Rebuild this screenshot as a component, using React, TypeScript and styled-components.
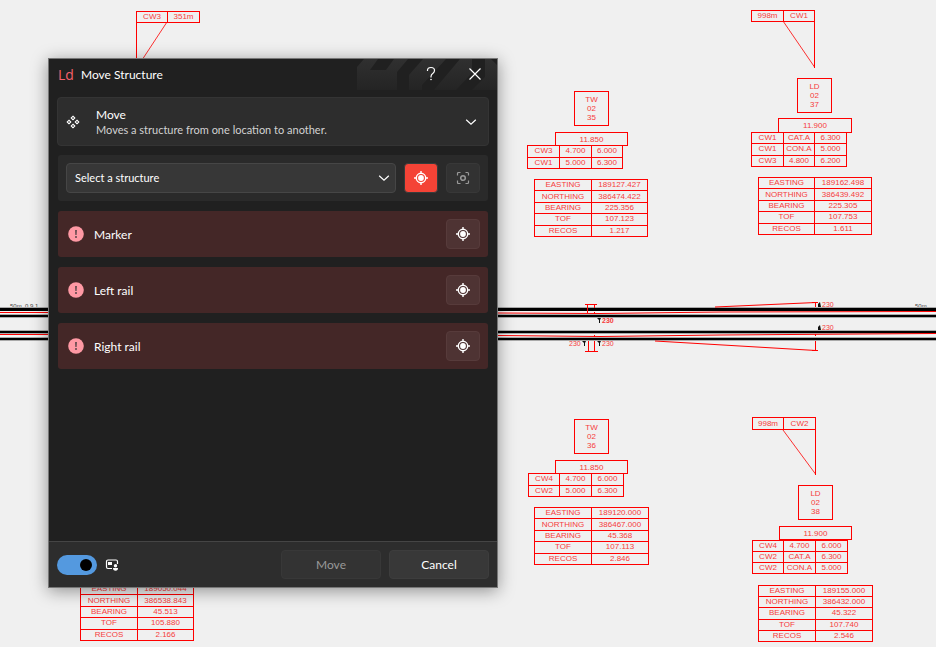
import React from "react";
import styled, { createGlobalStyle } from "styled-components";

const GlobalStyle = createGlobalStyle`
  *, *::before, *::after { box-sizing: border-box; }
  body {
    margin: 0;
    background: #f0f0f0;
    font-family: Lato, "Open Sans", sans-serif;
  }
`;

/* ---------- Drawing canvas ---------- */

const Canvas = styled.main`
  position: relative;
  min-height: 100vh;
  overflow: hidden;
  background: #f0f0f0;
`;

const Linework = styled.svg`
  position: absolute;
  inset: 0;
  width: 100%;
  height: 100%;
  font-family: "Liberation Sans", sans-serif;
  font-size: 6px;
`;

type Box = { $x: number; $y: number; $w: number; $h: number };

const Sheet = styled.table<Box>`
  position: absolute;
  left: ${(p) => p.$x}px;
  top: ${(p) => p.$y}px;
  width: ${(p) => p.$w}px;
  height: ${(p) => p.$h}px;
  table-layout: fixed;
  border-collapse: collapse;
  color: #f63c3c;
  font: 8px/8px "Liberation Sans", sans-serif;
  text-align: center;

  td {
    border: 1px solid #ff0000;
    padding: 0;
    white-space: nowrap;
  }
`;

const Plate = styled.div<Box>`
  position: absolute;
  left: ${(p) => p.$x}px;
  top: ${(p) => p.$y}px;
  width: ${(p) => p.$w}px;
  height: ${(p) => p.$h}px;
  display: flex;
  flex-direction: column;
  align-items: center;
  justify-content: center;
  border: 1px solid #ff0000;
  color: #f63c3c;
  font: 8px/9px "Liberation Sans", sans-serif;
`;

type Place = [number, number, number, number];

function DataSheet({ at, cols, rows }: { at: Place; cols: string[]; rows: string[][] }) {
  const [x, y, w, h] = at;
  return (
    <Sheet $x={x} $y={y} $w={w} $h={h}>
      <colgroup>
        {cols.map((c, i) => (
          <col key={i} width={c} />
        ))}
      </colgroup>
      <tbody>
        {rows.map((r, i) => (
          <tr key={i}>
            {r.map((c, j) => (
              <td key={j}>{c}</td>
            ))}
          </tr>
        ))}
      </tbody>
    </Sheet>
  );
}

function Label({ at, lines }: { at: Place; lines: string[] }) {
  const [x, y, w, h] = at;
  return (
    <Plate $x={x} $y={y} $w={w} $h={h}>
      {lines.map((l) => (
        <span key={l}>{l}</span>
      ))}
    </Plate>
  );
}

const info = (e: string, n: string, b: string, t: string, r: string) => [
  ["EASTING", e],
  ["NORTHING", n],
  ["BEARING", b],
  ["TOF", t],
  ["RECOS", r],
];

const half = ["57", "56"];
const thirds = ["32", "32", "31"];
const pair = ["32", "31"];

const sheets: { at: Place; cols: string[]; rows: string[][] }[] = [
  { at: [136, 11, 63, 12], cols: ["31", "32"], rows: [["CW3", "351m"]] },
  { at: [751, 10, 63, 12], cols: pair, rows: [["998m", "CW1"]] },
  { at: [752, 417, 63, 13], cols: ["31", "32"], rows: [["998m", "CW2"]] },
  { at: [527, 145, 95, 24], cols: thirds, rows: [["CW3", "4.700", "6.000"], ["CW1", "5.000", "6.300"]] },
  { at: [528, 473, 95, 24], cols: ["31", "32", "32"], rows: [["CW4", "4.700", "6.000"], ["CW2", "5.000", "6.300"]] },
  {
    at: [751, 132, 95, 35],
    cols: ["32", "31", "32"],
    rows: [["CW1", "CAT.A", "6.300"], ["CW1", "CON.A", "5.000"], ["CW3", "4.800", "6.200"]],
  },
  {
    at: [752, 540, 95, 34],
    cols: ["31", "32", "32"],
    rows: [["CW4", "4.700", "6.000"], ["CW2", "CAT.A", "6.300"], ["CW2", "CON.A", "5.000"]],
  },
  { at: [534, 179, 113, 58], cols: half, rows: info("189127.427", "386474.422", "225.356", "107.123", "1.217") },
  { at: [758, 177, 113, 58], cols: ["56", "57"], rows: info("189162.498", "386439.492", "225.305", "107.753", "1.611") },
  { at: [534, 507, 114, 58], cols: ["57", "57"], rows: info("189120.000", "386467.000", "45.368", "107.113", "2.846") },
  { at: [758, 585, 114, 57], cols: ["57", "57"], rows: info("189155.000", "386432.000", "45.322", "107.740", "2.546") },
  { at: [80, 583, 113, 58], cols: half, rows: info("189050.044", "386538.843", "45.513", "105.880", "2.166") },
];

const labels: { at: Place; lines: string[] }[] = [
  { at: [574, 91, 35, 35], lines: ["TW", "02", "35"] },
  { at: [574, 419, 35, 35], lines: ["TW", "02", "36"] },
  { at: [797, 78, 35, 35], lines: ["LD", "02", "37"] },
  { at: [798, 485, 35, 35], lines: ["LD", "02", "38"] },
  { at: [555, 132, 73, 14], lines: ["11.850"] },
  { at: [555, 460, 73, 14], lines: ["11.850"] },
  { at: [778, 118, 74, 15], lines: ["11.900"] },
  { at: [779, 526, 73, 14], lines: ["11.900"] },
];

const Track = () => (
  <Linework aria-hidden="true">
    <g fill="#444">
      <text x="10" y="308">50m&#160;&#160;0.9.1</text>
      <text x="915" y="308">50m</text>
    </g>
    <g fill="#aaa">
      <rect y="307" width="100%" height="11" />
      <rect y="330" width="100%" height="11" />
    </g>
    <g fill="#f4f4f4">
      <rect y="311" width="100%" height="3" />
      <rect y="334" width="100%" height="3" />
    </g>
    <g fill="#000">
      <rect y="308" width="100%" height="3" />
      <rect y="315" width="100%" height="2" />
      <rect y="331" width="100%" height="2" />
      <rect y="338" width="100%" height="2" />
    </g>
    <g stroke="#ff0000" fill="none">
      <path d="M0 312.500H48M498 313L600 313.500L720 312L936 311.500H4000" />
      <path d="M0 334.500H48M498 335.500L600 336.500L720 335L936 333.500H4000" />
      <path d="M585 304.500H597M587.500 304V313M594.500 304V308M594.500 312V314M715 307L816 302.500M812 302.500H818M815.500 302V307" />
      <path d="M585 351.500H598M588.500 341V351M594.500 341V351M594.500 335V337M655 341L816 350.500M812 350.500H818M815.500 334V336M815.500 341V350" />
    </g>
    <g stroke="#ff0000" fill="none">
      <path d="M136.500 22V60M814.500 21V68M815.500 429V475" />
      <path d="M167 22L142 60M783 21L814.500 67M783 430L815.500 474" strokeOpacity=".8" />
    </g>
    <g fill="#111">
      <path d="M818 307V304L820 302L821 307ZM818 330V327L820 325L821 330ZM597 318H601L600 320V323H599V320ZM597 341H601L600 343V346H599V343ZM582 341H586L585 343V346H584V343Z" />
    </g>
    <g fill="#f63c3c" fontSize="7">
      <text x="822" y="307">230</text>
      <text x="822" y="330">230</text>
      <text x="602" y="323" fontWeight="bold">230</text>
      <text x="602" y="346">230</text>
      <text x="569" y="346">230</text>
    </g>
  </Linework>
);

/* ---------- Dialog ---------- */

const Dialog = styled.section`
  position: absolute;
  left: 48px;
  top: 58px;
  width: 450px;
  min-height: 530px;
  display: flex;
  flex-direction: column;
  border: 1px solid #777;
  background: #202020;
  color: #fff;
  font-size: 12px;
  line-height: 16px;
  box-shadow: 0 3px 16px rgba(0, 0, 0, 0.4);
`;

const TitleBar = styled.header`
  position: relative;
  display: flex;
  align-items: center;
  height: 32px;
  padding: 0 8px;
`;

const Pattern = styled.svg`
  position: absolute;
  top: 0;
  right: 0;
`;

const Brand = styled.span`
  width: 24px;
  padding-left: 1px;
  color: #f5616b;
  font: 400 14px/20px "Open Sans", sans-serif;
`;

const Title = styled.h1`
  flex: 1;
  margin: 0;
  font-size: 12px;
  font-weight: 400;
`;

const CaptionButton = styled.button`
  position: relative;
  display: grid;
  place-items: center;
  align-self: flex-start;
  width: 28px;
  height: 30px;
  margin-left: 16px;
  padding: 0;
  border: 0;
  background: transparent;
  color: #fff;
`;

const Content = styled.div`
  flex: 1;
  display: flex;
  flex-direction: column;
  gap: 10px;
  padding: 6px 9px;
`;

const CommandCard = styled.button`
  display: flex;
  align-items: center;
  height: 49px;
  margin: 0 -1px -1px;
  padding: 0 11px 0 8px;
  border: 1px solid #343434;
  border-radius: 4px;
  background: #2d2d2d;
  color: #fff;
  font: inherit;
  text-align: left;
`;

const CommandText = styled.span`
  flex: 1;
  display: flex;
  flex-direction: column;
  margin-left: 16px;
`;

const CommandName = styled.span`
  line-height: 15px;
`;

const CommandHint = styled.span`
  color: #d2d2d2;
  font-size: 11px;
  line-height: 15px;
`;

const Row = styled.div<{ $error?: boolean }>`
  display: flex;
  align-items: center;
  gap: ${(p) => (p.$error ? 10 : 8)}px;
  height: 46px;
  padding: ${(p) => (p.$error ? "0 8px 0 10px" : "0 8px")};
  border-radius: 3px;
  background: ${(p) => (p.$error ? "#442727" : "#2a2a2a")};
`;

const RowLabel = styled.span`
  flex: 1;
  padding-top: 2px;
`;

const SelectWrap = styled.label`
  position: relative;
  flex: 1;
  display: flex;

  svg {
    position: absolute;
    right: 6px;
    top: 9px;
    pointer-events: none;
  }
`;

const Select = styled.select`
  appearance: none;
  width: 100%;
  height: 30px;
  padding: 0 28px 0 8px;
  border: 1px solid #464646;
  border-radius: 4px;
  background: #373737;
  color: #fff;
  font: 11px/16px Lato, "Open Sans", sans-serif;
`;

const tones = {
  active: ["#f44336", "#373c3c", "#fff"],
  idle: ["#323232", "#383838", "#999"],
  error: ["#4e3333", "#573b3b", "#fff"],
};

const ToolButton = styled.button<{ $tone: keyof typeof tones }>`
  display: grid;
  place-items: center;
  width: 34px;
  height: 30px;
  padding: 0;
  border: 1px solid ${(p) => tones[p.$tone][1]};
  border-radius: 4px;
  background: ${(p) => tones[p.$tone][0]};
  color: ${(p) => tones[p.$tone][2]};
`;

const Footer = styled.footer`
  display: flex;
  align-items: center;
  gap: 8px;
  height: 46px;
  padding: 0 8px;
  border-top: 1px solid #454545;
  background: #2d2d2d;
`;

const Option = styled.label`
  flex: 1;
  display: flex;
  align-items: center;
  gap: 8px;
`;

const Toggle = styled.input`
  appearance: none;
  display: flex;
  align-items: center;
  justify-content: flex-start;
  width: 40px;
  height: 20px;
  margin: 0;
  padding: 0 5px;
  border-radius: 10px;
  background: #777;

  &::before {
    content: "";
    width: 12px;
    height: 12px;
    border-radius: 50%;
    background: #000;
  }

  &:checked {
    justify-content: flex-end;
    background: #5499df;
  }
`;

const ActionButton = styled.button`
  width: 100px;
  height: 29px;
  padding: 0;
  border: 1px solid #3d3d3d;
  border-radius: 4px;
  background: #383838;
  color: #fff;
  font: inherit;

  &:disabled {
    border-color: #383838;
    background: #333;
    color: #999;
  }
`;

const Chevron = () => (
  <svg width="12" height="12" viewBox="0 0 12 12" fill="none" stroke="currentColor" strokeWidth="1.200">
    <path d="M1.200 3.800L6 8.200L10.800 3.800" />
  </svg>
);

const Target = () => (
  <svg width="14" height="14" viewBox="0 0 14 14" fill="none" stroke="currentColor" strokeWidth="1.4">
    <circle cx="7" cy="7" r="4.700" />
    <circle cx="7" cy="7" r="2.900" fill="currentColor" stroke="none" />
    <path d="M7 0V2.300M7 11.700V14M0 7H2.300M11.700 7H14" />
  </svg>
);

const Capture = () => (
  <svg width="14" height="14" viewBox="0 0 14 14" fill="none" stroke="currentColor" strokeWidth="1.200">
    <path d="M1.500 4.500V2.500Q1.500 1.500 2.500 1.500H4.500M9.500 1.500H11.500Q12.500 1.500 12.500 2.500V4.500M12.500 9.500V11.500Q12.500 12.500 11.500 12.500H9.500M4.500 12.500H2.500Q1.500 12.500 1.500 11.500V9.500" />
    <circle cx="7" cy="7" r="2.300" strokeWidth="1.500" />
  </svg>
);

const Alert = () => (
  <svg width="16" height="16" viewBox="0 0 16 16">
    <circle cx="8" cy="8" r="7.800" fill="#ff99a4" />
    <path d="M7.100 4H8.900L8.600 9H7.400Z" fill="#5a4548" />
    <circle cx="8" cy="11" r="1" fill="#5a4548" />
  </svg>
);

const MoveGlyph = () => (
  <svg width="14" height="14" viewBox="0 0 14 14" fill="none" stroke="currentColor" strokeWidth="1.100">
    <path d="M7 1.200L8.800 3L7 4.800L5.200 3ZM7 9.200L8.800 11L7 12.800L5.200 11ZM3 5.200L4.800 7L3 8.800L1.200 7ZM11 5.200L12.800 7L11 8.800L9.200 7Z" />
  </svg>
);

const PanelGlyph = () => (
  <svg width="14" height="14" viewBox="0 0 14 14" fill="none" stroke="#fff">
    <path d="M7 10.500H3Q1.500 10.500 1.500 9V3.500Q1.500 2 3 2H11Q12.500 2 12.500 3.500V6" strokeWidth="1.200" />
    <rect x="3" y="4" width="4" height="3" fill="#fff" stroke="none" />
    <circle cx="10.500" cy="7.800" r="1.700" fill="#fff" stroke="none" />
    <path d="M8 10H13Q13 12.800 10.500 12.800Q8 12.800 8 10Z" fill="#fff" stroke="none" />
  </svg>
);

export default function App() {
  return (
    <>
      <GlobalStyle />
      <Canvas>
        <Track />
        {sheets.map((s, i) => (
          <DataSheet key={i} {...s} />
        ))}
        {labels.map((l, i) => (
          <Label key={i} {...l} />
        ))}

        <Dialog role="dialog" aria-labelledby="dialog-title">
          <TitleBar>
            <Pattern width="140" height="31" viewBox="0 0 140 31" aria-hidden="true">
              <defs>
                <linearGradient id="fade" x1="0" y1="0" x2="0" y2="31" gradientUnits="userSpaceOnUse">
                  <stop offset="0" stopColor="#303030" />
                  <stop offset="1" stopColor="#242424" />
                </linearGradient>
              </defs>
              <path
                fill="url(#fade)"
                d="M0 8L7 0H21L13 11H29L37 0H51L40 13V31H0ZM52 31V16L66 0H89L65 26V31ZM77 31L103 0H115V14L99 31ZM128 0H134L140 6V31H115V31L128 18Z"
              />
            </Pattern>
            <Brand>Ld</Brand>
            <Title id="dialog-title">Move Structure</Title>
            <CaptionButton type="button" aria-label="Help">
              <svg width="12" height="16" viewBox="0 0 12 16" fill="none" stroke="currentColor" strokeWidth="1.200">
                <path d="M2.500 5V4.500Q2.500 1.500 6 1.500Q9.500 1.500 9.500 4.500Q9.500 6 8 7.200Q6 8.600 6 10.500V11.500" />
                <circle cx="6" cy="13.500" r=".8" fill="currentColor" stroke="none" />
              </svg>
            </CaptionButton>
            <CaptionButton type="button" aria-label="Close">
              <svg width="12" height="12" viewBox="0 0 12 12" stroke="currentColor" strokeWidth="1.200">
                <path d="M.5 .5L11.500 11.500M11.500 .5L.5 11.500" />
              </svg>
            </CaptionButton>
          </TitleBar>

          <Content>
            <CommandCard type="button">
              <MoveGlyph />
              <CommandText>
                <CommandName>Move</CommandName>
                <CommandHint>Moves a structure from one location to another.</CommandHint>
              </CommandText>
              <Chevron />
            </CommandCard>

            <Row>
              <SelectWrap>
                <Select aria-label="Structure" defaultValue="">
                  <option value="">Select a structure</option>
                </Select>
                <Chevron />
              </SelectWrap>
              <ToolButton type="button" $tone="active" aria-label="Pick structure">
                <Target />
              </ToolButton>
              <ToolButton type="button" $tone="idle" disabled aria-label="Zoom to structure">
                <Capture />
              </ToolButton>
            </Row>

            {["Marker", "Left rail", "Right rail"].map((name) => (
              <Row key={name} $error>
                <Alert />
                <RowLabel>{name}</RowLabel>
                <ToolButton type="button" $tone="error" aria-label={`Pick ${name}`}>
                  <Target />
                </ToolButton>
              </Row>
            ))}
          </Content>

          <Footer>
            <Option>
              <Toggle type="checkbox" role="switch" defaultChecked aria-label="Keep panel open" />
              <PanelGlyph />
            </Option>
            <ActionButton type="button" disabled>
              Move
            </ActionButton>
            <ActionButton type="button">Cancel</ActionButton>
          </Footer>
        </Dialog>
      </Canvas>
    </>
  );
}
